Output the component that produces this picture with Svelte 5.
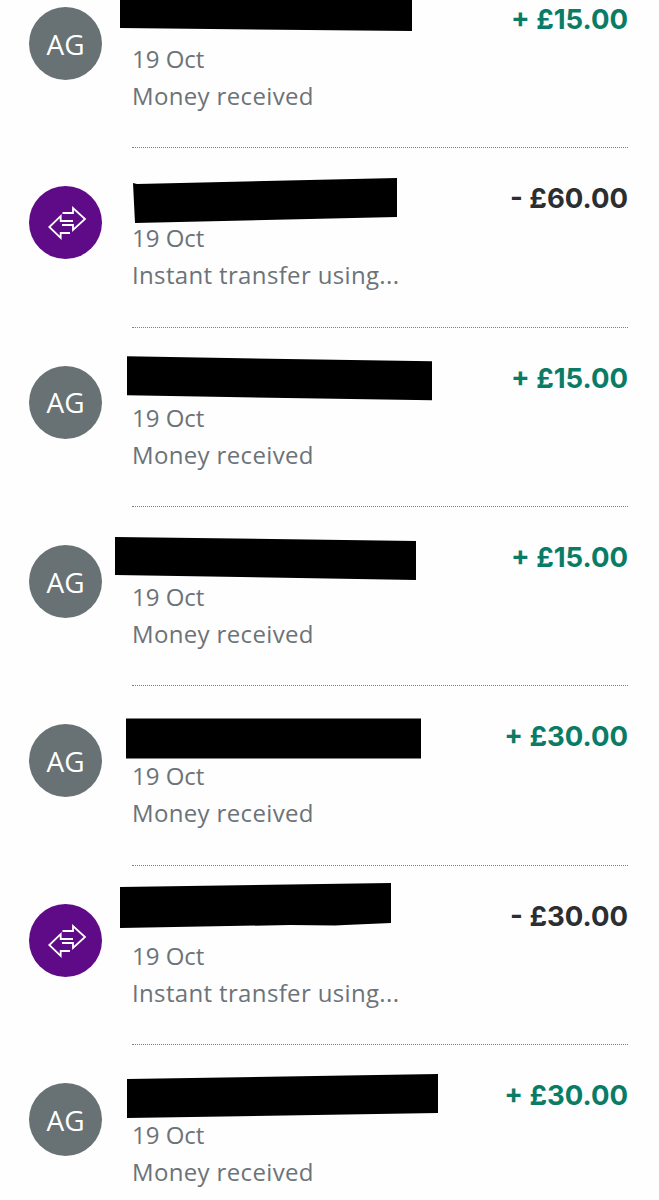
<script>
	const received = (amount, bar) => ({ kind: 'person', amount, label: 'Money received', bar });
	const sent = (amount, bar) => ({ kind: 'transfer', amount, label: 'Instant transfer using...', bar });

	// The black bars hide the names; points are relative to the top left of the row
	const rows = [
		received('+ £15.00', '120,0 412,0 412,62 120,59'),
		sent('- £60.00', '133,35 137,36 397,30 397,69 135,75'),
		received('+ £15.00', '127,28.3 432,33.3 432,72.3 127,67.3'),
		received('+ £15.00', '115,30 416,34 416,73 115,68'),
		received('+ £30.00', '126,32.6 421,32.6 421,72.6 126,72.6'),
		sent('- £30.00', '120,21 391,17 391,57 345,59 335,59.5 290,59 120,62'),
		received('+ £30.00', '127,34 438,29 438,68 127,73')
	];
</script>

<main class="page">
	<ul class="list">
		{#each rows as row}
			<li class="row">
				{#if row.kind === 'person'}
					<div class="avatar person">AG</div>
				{:else}
					<div class="avatar transfer">
						<svg viewBox="0 0 73 73" width="73" height="73" fill="none" stroke="#fff" stroke-width="1.8">
							<path d="M33.5 27H44V22L56 33 44 44V39H33" />
							<path d="M41 47H31.7V52L20.3 41 31.7 30V35H44" />
						</svg>
					</div>
				{/if}
				<div class="info">
					<div class="date">19 Oct</div>
					<div class="label">{row.label}</div>
				</div>
				<div class="amount" class:plus={row.kind === 'person'}>{row.amount}</div>
				<svg class="redaction" viewBox="0 0 659 80" width="659" height="80">
					<polygon points={row.bar} fill="#000" />
				</svg>
			</li>
		{/each}
	</ul>
</main>

<style>
	:global(body) {
		background: #fefefe;
	}
	.page {
		height: 1200px;
		overflow: hidden;
		font-family: "Open Sans", Lato, sans-serif;
	}
	.list {
		list-style: none;
		margin: -31px 0 0;
		padding: 0;
	}
	.row {
		position: relative;
		display: flex;
		align-items: flex-start;
		box-sizing: border-box;
		height: 179.35px;
		padding: 38px 31px 0 29px;
	}
	.row::after {
		content: '';
		position: absolute;
		left: 132px;
		right: 31px;
		bottom: 0;
		border-top: 1px dotted #7b8083;
	}
	.avatar {
		display: flex;
		flex: none;
		align-items: center;
		justify-content: center;
		width: 73px;
		height: 73px;
		border-radius: 50%;
		color: #fff;
		font-size: 28px;
	}
	.person {
		background: #687173;
	}
	.transfer {
		background: #5f0a87;
	}
	.info {
		flex: 1;
		padding: 0 0 0 30px;
		color: #6c7378;
		font-size: 24px;
		line-height: 37px;
	}
	.date {
		margin-top: 33px;
	}
	.label {
		letter-spacing: 0.35px;
	}
	.amount {
		margin-top: -2px;
		font-family: Inter, "Open Sans", sans-serif;
		color: #2c2e2f;
		font-size: 27.5px;
		font-weight: 700;
		line-height: 28px;
	}
	.plus {
		color: #0a7c66;
	}
	.redaction {
		position: absolute;
		left: 0;
		top: 0;
	}
</style>
